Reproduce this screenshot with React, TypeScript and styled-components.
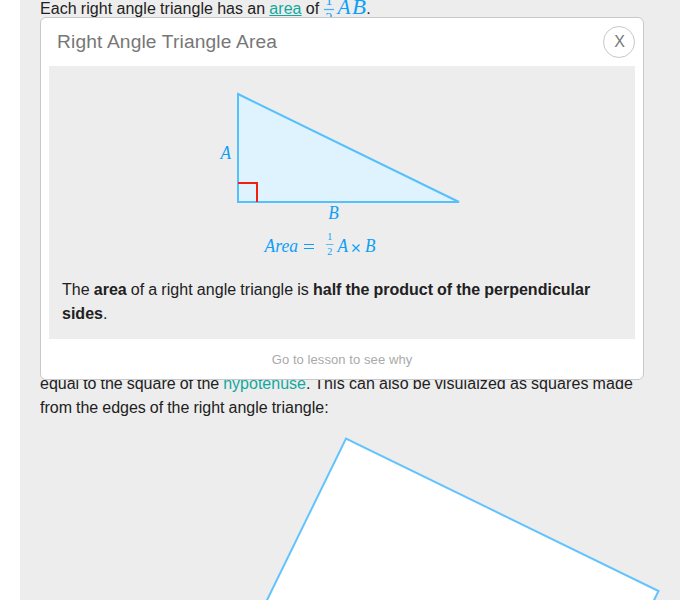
import React from "react";
import styled, { createGlobalStyle } from "styled-components";

const Global = createGlobalStyle`
  * { box-sizing: border-box; }
  html, body { margin: 0; padding: 0; background: #fff; overflow: hidden; }
`;

const Page = styled.main`
  position: relative;
  width: 660px;
  height: 600px;
  margin: 0 20px;
  padding: 0 20px;
  overflow: hidden;
  background: #ededed;
  color: #212121;
  font: 16px/24px "Liberation Sans", Arial, sans-serif;
`;

const Paragraph = styled.p<{ $gap: number }>`
  margin: ${(p) => p.$gap}px 0 0;
  white-space: nowrap;
  word-spacing: -0.45px;
`;

const Run = styled.span<{ $tracking: number }>`
  letter-spacing: ${(p) => p.$tracking}px;
`;

const Term = styled.a<{ $active?: boolean }>`
  color: #13a89e;
  text-decoration: ${(p) => (p.$active ? "underline" : "none")};
  text-underline-offset: 1px;
`;

const InlineMath = styled.svg`
  display: inline-block;
  width: 43px;
  height: 24px;
  vertical-align: top;
  overflow: visible;
`;

const MathText = styled.text`
  fill: #0c9ff8;
  font-family: "Liberation Serif", "Times New Roman", serif;
  font-style: italic;
`;

const Digit = styled(MathText)`
  font-style: normal;
`;

const SquareFigure = styled.svg`
  display: block;
  width: 620px;
  height: 180px;
`;

const Card = styled.section`
  position: absolute;
  top: 17px;
  left: 20px;
  width: 604px;
  height: 363px;
  padding: 0 8px;
  display: flex;
  flex-direction: column;
  background: #fff;
  border: 1px solid #c8c8c8;
  border-radius: 6px;
`;

const CardHeader = styled.header`
  display: flex;
  align-items: center;
  justify-content: space-between;
  height: 48px;
  padding-left: 8px;
`;

const Title = styled.h1`
  margin: 0;
  color: #777;
  font-size: 19.2px;
  font-weight: 400;
  letter-spacing: 0.14px;
`;

const CloseButton = styled.button`
  width: 32px;
  height: 32px;
  padding: 0 0 0 1px;
  border: 1px solid #c8c8c8;
  border-radius: 50%;
  background: #fff;
  color: #777;
  font: 16px/30px "Liberation Sans", Arial, sans-serif;
`;

const CardBody = styled.div`
  height: 273px;
  background: #ededed;
`;

const TriangleFigure = styled.svg`
  display: block;
  width: 586px;
  height: 212px;
`;

const Statement = styled.p`
  margin: 0;
  padding: 0 13px;
  letter-spacing: 0.055px;
  word-spacing: -0.45px;

  b { letter-spacing: 0.01px; }
`;

const CardFooter = styled.footer`
  display: flex;
  flex: 1;
  align-items: center;
  justify-content: center;
  padding-top: 2px;
`;

const LessonLink = styled.a`
  color: #aaa;
  font-size: 13px;
  letter-spacing: 0.08px;
`;

export default function App() {
  return (
    <>
      <Global />
      <Page>
        <Paragraph $gap={-3}>
          <Run $tracking={0.075}>
            Each right angle triangle has an <Term $active>area</Term> of{" "}
          </Run>
          <InlineMath viewBox="0 0 43 24">
            <Digit x="2.5" y="8" fontSize="14">1</Digit>
            <path d="M1 12.5H11" stroke="#3aaef8" strokeWidth="1.2" />
            <Digit x="2.5" y="26" fontSize="14">2</Digit>
            <MathText x="14.5" y="17" fontSize="20" textLength="13" lengthAdjust="spacingAndGlyphs">A</MathText>
            <MathText x="29" y="17" fontSize="20" textLength="14" lengthAdjust="spacingAndGlyphs">B</MathText>
          </InlineMath>
          .
        </Paragraph>
        <Paragraph $gap={351}>
          equal to the square of the <Term>hypotenuse</Term>
          <Run $tracking={0.08}>. This can also be visulaized as squares made</Run>
          <br />
          from the edges of the right angle triangle:
        </Paragraph>
        <SquareFigure viewBox="40 420 620 180">
          <path d="M193 751.5L346 438.5L658.5 591L505.5 904Z" fill="#fff" stroke="#63c3fc" strokeWidth="2" />
        </SquareFigure>

        <Card>
          <CardHeader>
            <Title>Right Angle Triangle Area</Title>
            <CloseButton aria-label="Close">X</CloseButton>
          </CardHeader>
          <CardBody>
            <TriangleFigure viewBox="49 66 586 212">
              <path d="M238 94L459 202H238Z" fill="#dff3fe" stroke="#55c0fc" strokeWidth="2" />
              <path d="M238 183H257V202" fill="none" stroke="#f0200f" strokeWidth="2" />
              <MathText x="220.5" y="159.3" fontSize="18" textLength="10.5" lengthAdjust="spacingAndGlyphs">A</MathText>
              <MathText x="328.3" y="219.3" fontSize="18" textLength="10.5" lengthAdjust="spacingAndGlyphs">B</MathText>
              <MathText x="264.5" y="252.3" fontSize="18" textLength="33.5" lengthAdjust="spacingAndGlyphs">Area</MathText>
              <path d="M304 244.5H314M304 248.5H314" stroke="#0c9ff8" />
              <Digit x="327.2" y="240" fontSize="10">1</Digit>
              <path d="M326 244.5H333.5" stroke="#5bbcf5" />
              <Digit x="327.3" y="255" fontSize="10">2</Digit>
              <MathText x="337.5" y="252.3" fontSize="18" textLength="10.5" lengthAdjust="spacingAndGlyphs">A</MathText>
              <path d="M352.5 244.5L359.5 251.5M359.5 244.5L352.5 251.5" stroke="#0c9ff8" strokeWidth="1.2" />
              <MathText x="365" y="252.3" fontSize="18" textLength="10.5" lengthAdjust="spacingAndGlyphs">B</MathText>
            </TriangleFigure>
            <Statement>
              The <b>area</b> of a right angle triangle is <b>half the product of the perpendicular sides</b>.
            </Statement>
          </CardBody>
          <CardFooter>
            <LessonLink>Go to lesson to see why</LessonLink>
          </CardFooter>
        </Card>
      </Page>
    </>
  );
}
